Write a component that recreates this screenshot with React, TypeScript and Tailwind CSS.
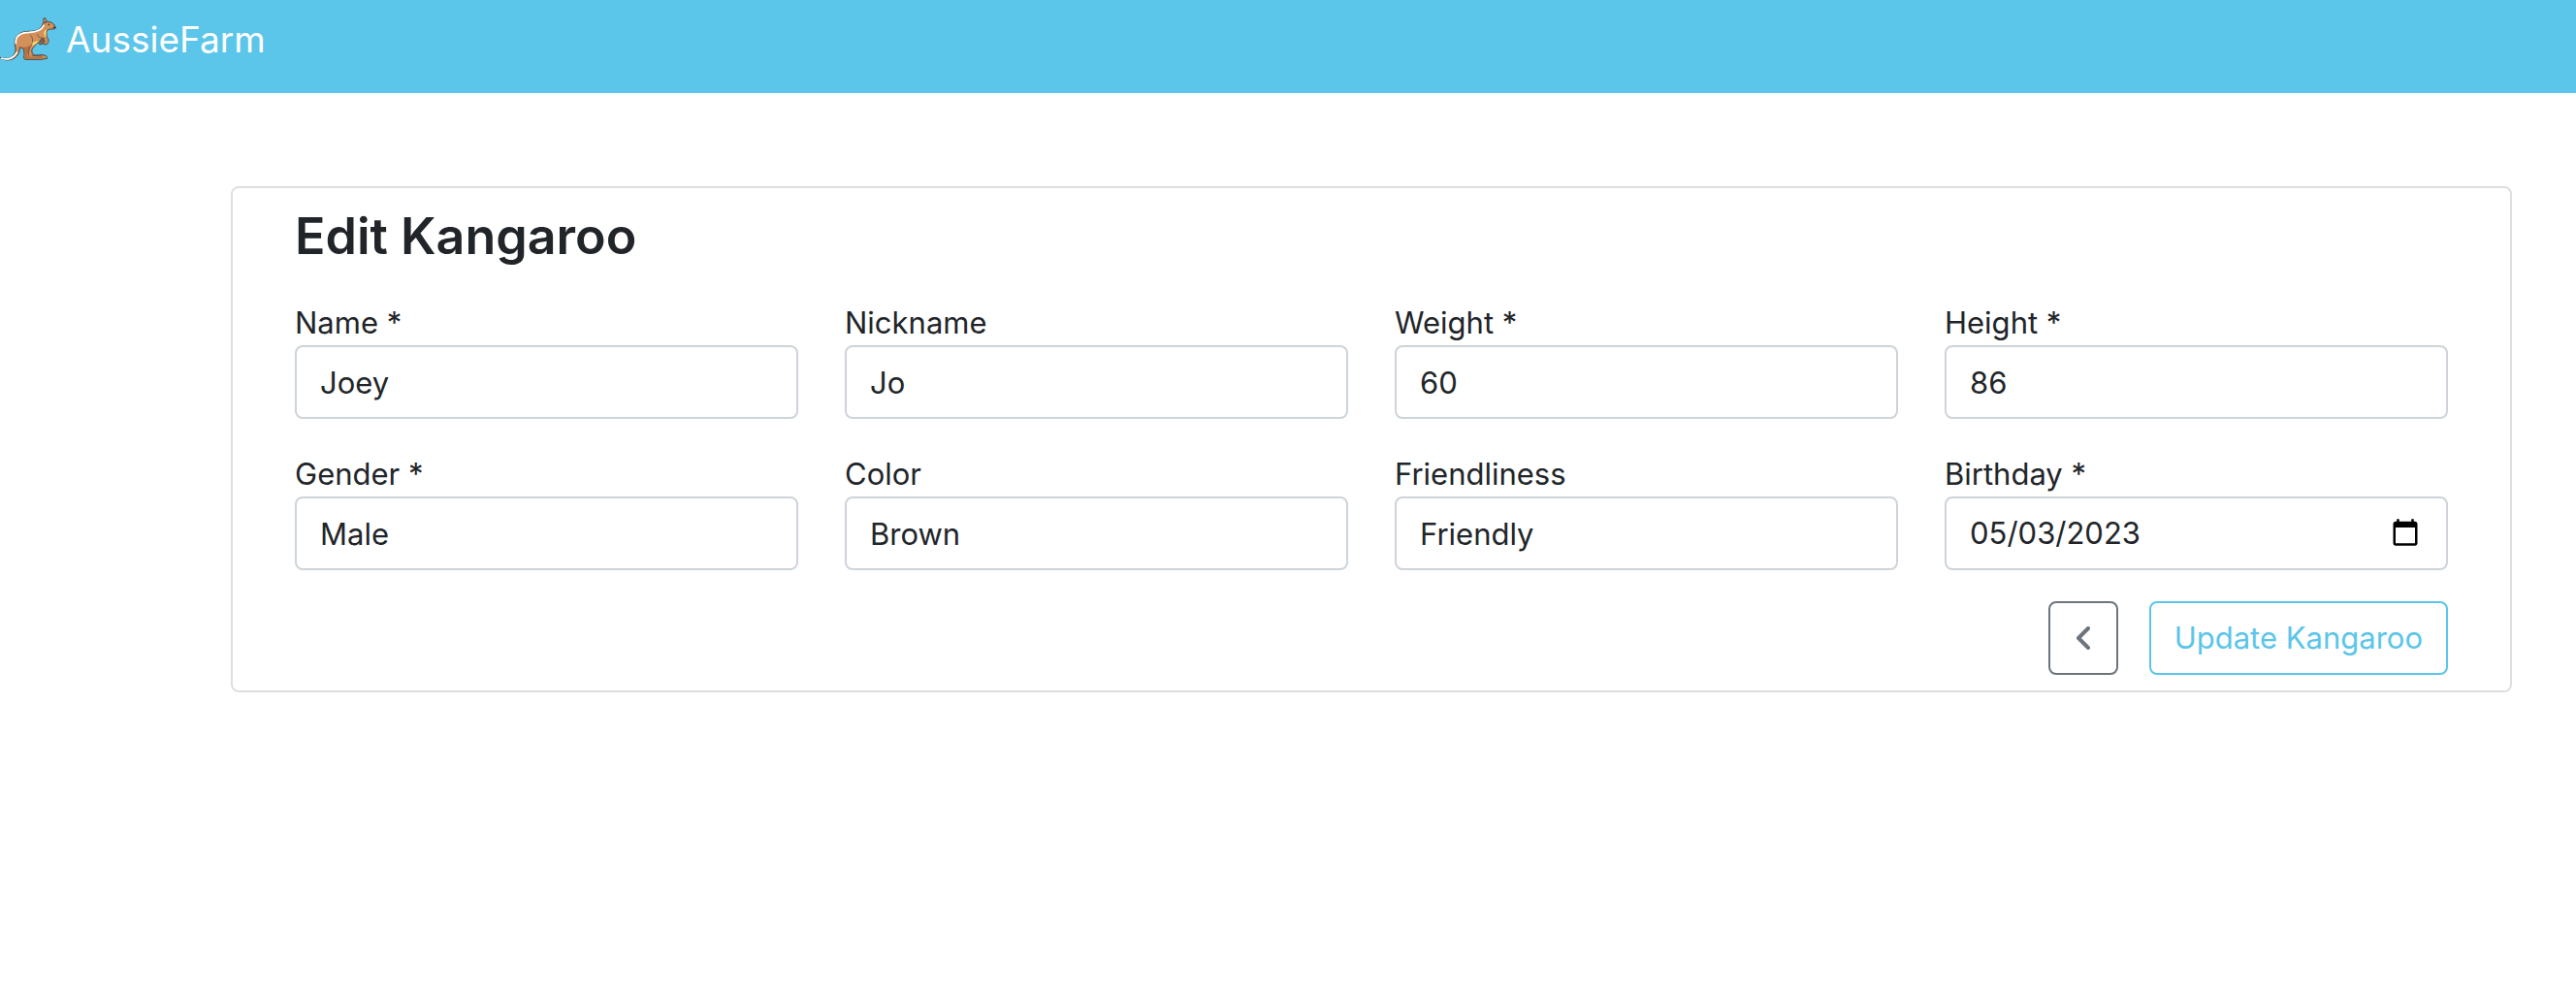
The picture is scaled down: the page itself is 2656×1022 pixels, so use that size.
import type { InputHTMLAttributes } from "react";

type FieldProps = InputHTMLAttributes<HTMLInputElement> & { id: string; label: string };

function Field({ id, label, ...rest }: FieldProps) {
  return (
    <div className="flex min-w-0 flex-col">
      <label htmlFor={id} className="leading-[46px]">
        {label}
      </label>
      <input
        id={id}
        name={id}
        className="h-[76px] w-full rounded-lg border-2 border-[#ced4da] bg-white px-6 outline-none focus:border-[#5bc5ea] [&::-webkit-calendar-picker-indicator]:size-8 [&::-webkit-datetime-edit-day-field]:p-0 [&::-webkit-datetime-edit-month-field]:p-0 [&::-webkit-datetime-edit-year-field]:p-0"
        {...rest}
      />
    </div>
  );
}

function KangarooLogo() {
  return (
    <svg viewBox="0 3 192 180" className="h-[60px] w-16 shrink-0" aria-hidden="true" strokeLinejoin="round" strokeLinecap="round">
      <g stroke="#4a4440" strokeWidth="3">
        <path d="M120 84C126 92 130 98 122 102C117 106 123 109 130 106C137 102 136 94 129 84Z" fill="#a8623a" />
        <path
          d="M1 148C22 155 40 150 47 132C51 122 44 108 46 96C50 76 66 67 90 67C112 67 128 62 133 42C134 37 139 36 145 37C158 37 166 42 170 51C173 58 168 61 161 60C155 60 149 61 146 64C142 73 144 80 146 86C152 94 151 103 144 107C137 110 131 106 136 102C142 99 136 93 131 88C125 95 118 103 112 106C106 116 96 120 99 132C100 137 103 139 109 141L132 140C140 141 146 144 147 149C145 153 136 151 130 154L78 154C72 152 74 146 75 139L74 122C68 120 64 116 61 117C62 136 50 150 35 154C22 158 8 155 1 148Z"
          fill="#d3905a"
        />
        <path d="M137 40C132 33 134 27 138 25C144 29 144 34 143 38Z" fill="#c98a63" />
      </g>
      <path d="M139 64C134 70 135 81 143 86C142 77 142 70 145 62Z" fill="#f7d56a" />
      <path d="M97 100C106 100 116 96 121 95C117 102 109 108 99 111Z" fill="#f7d56a" />
      <path d="M64 112C71 118 81 117 91 110C97 120 86 132 84 144C92 148 118 144 138 148C124 152 96 152 78 152C74 144 80 128 74 121Z" fill="#b9703f" />
      <path d="M49 104C46 82 64 70 90 70C114 69 129 64 135 49" fill="none" stroke="#fff" strokeWidth="5" />
      <path d="M5 150C25 157 44 150 52 132" fill="none" stroke="#fff" strokeWidth="5" />
      <g fill="none" stroke="#4a4440" strokeWidth="2">
        <path d="M94 79C104 87 102 104 95 112C87 123 88 134 89 142" />
        <path d="M116 77C118 87 129 87 138 89" />
        <path d="M99 142L129 144" />
      </g>
      <circle cx="151" cy="46" r="2.5" fill="#2b2624" />
      <path d="M166 55L171 56" stroke="#2b2624" strokeWidth="4" />
    </svg>
  );
}

export default function App() {
  return (
    <div className="min-h-screen bg-white font-[Inter,'Liberation_Sans',sans-serif] text-[31px] text-[#212529]">
      <header className="flex h-24 items-start bg-[#5bc5ea] pt-[11px]">
        <a href="#" className="flex items-center gap-1 text-[37px] leading-[60px] text-white">
          <KangarooLogo />
          AussieFarm
        </a>
      </header>

      <main className="pt-24 pr-[66px] pl-[238px]">
        <form className="rounded-lg border-2 border-[#dfdfdf] px-16 py-4" onSubmit={(e) => e.preventDefault()}>
          <h1 className="mb-8 text-[52px] leading-[68px] font-semibold">Edit Kangaroo</h1>
          <div className="grid grid-cols-4 gap-x-12 gap-y-[34px]">
            <Field id="name" label="Name *" defaultValue="Joey" />
            <Field id="nickname" label="Nickname" defaultValue="Jo" />
            <Field id="weight" label="Weight *" defaultValue="60" inputMode="numeric" />
            <Field id="height" label="Height *" defaultValue="86" inputMode="numeric" />
            <Field id="gender" label="Gender *" defaultValue="Male" />
            <Field id="color" label="Color" defaultValue="Brown" />
            <Field id="friendliness" label="Friendliness" defaultValue="Friendly" />
            <Field id="birthday" label="Birthday *" type="date" defaultValue="2023-05-03" />
          </div>
          <div className="mt-8 flex justify-end gap-8">
            <button
              type="button"
              aria-label="Back"
              className="flex h-[76px] w-[72px] items-center justify-center rounded-lg border-2 border-[#6c757d] text-[#6c757d]"
            >
              <svg viewBox="0 0 14 24" className="h-6 w-[14px]" fill="none" stroke="currentColor" strokeWidth="4" strokeLinecap="round" strokeLinejoin="round" aria-hidden="true">
                <path d="M12 2L2 12L12 22" />
              </svg>
            </button>
            <button type="submit" className="h-[76px] rounded-lg border-2 border-[#5bc5ea] px-6 text-[#5bc5ea]">
              Update Kangaroo
            </button>
          </div>
        </form>
      </main>
    </div>
  );
}
